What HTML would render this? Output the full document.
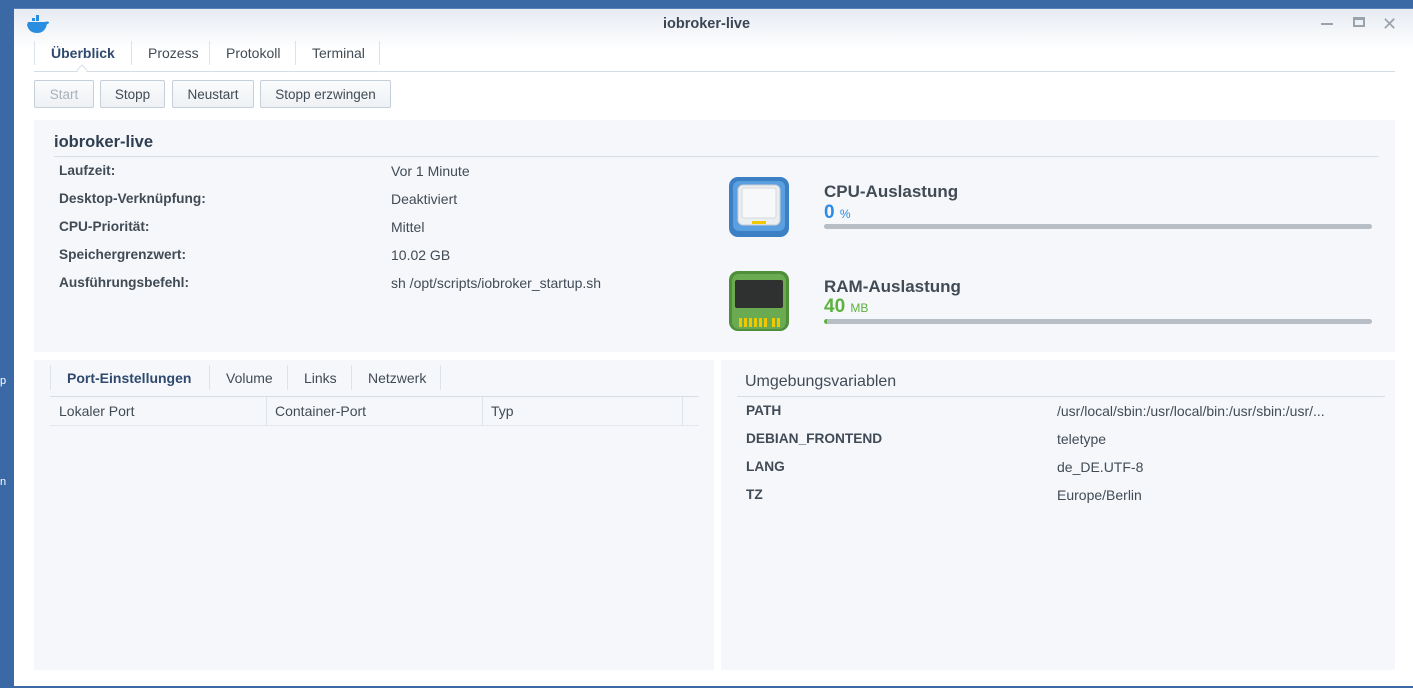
<!DOCTYPE html>
<html><head><meta charset="utf-8"><style>
*{margin:0;padding:0;box-sizing:border-box}
body{width:1413px;height:688px;overflow:hidden;background:#3b69a6;font-family:"Liberation Sans",sans-serif;font-size:13px;color:#414b55;position:relative}
.a{position:absolute}
#win{left:14px;top:8px;width:1399px;height:678px;background:#fff;border-top:1px solid #5a82b8}
#tb{left:0;top:0;width:100%;height:40px;background:linear-gradient(#e6ebf2,#fff)}
.tab{position:absolute;top:45px;font-size:14px;color:#414b55}
.sep{position:absolute;width:1px;background:#dde3ea}
.btn{position:absolute;top:80px;height:28px;border:1px solid #c5cfd9;border-radius:2px;background:linear-gradient(#fafbfc,#eef1f5);font-size:13.5px;text-align:center;line-height:28px;color:#414b55}
.panel{position:absolute;background:#f5f7fb}
.lbl{position:absolute;font-weight:bold;font-size:13.7px;color:#414b55}
.val{position:absolute;font-size:14px;color:#414b55}
.bar{position:absolute;height:5px;border-radius:3px;background:#b7bec6}
</style></head><body>
<div class="a" id="win">
<div class="a" id="tb"></div>
</div>
<svg class="a" style="left:26px;top:15px" width="24" height="20" viewBox="0 0 24 20"><path d="M1 10 Q3 18 11 18 Q19 18 21 9 Q23 9 23 7 Q21 6 19 7 L2 7 Z" fill="#2a8ee0"/><rect x="6" y="3" width="3" height="3" fill="#2a8ee0"/><rect x="10" y="3" width="3" height="3" fill="#2a8ee0"/><rect x="10" y="0" width="3" height="3" fill="#2a8ee0"/></svg>
<div class="a" style="left:0;width:1413px;top:16px;text-align:center;font-weight:bold;font-size:14.5px;color:#3a4654">iobroker-live</div>
<div class="a" style="left:1321px;top:23px;width:12px;height:2px;background:#9aa3ad"></div>
<div class="a" style="left:1353px;top:17px;width:12px;height:10px;border:2px solid #9aa3ad;border-top-width:3px"></div>
<div class="a" style="left:1382px;top:14px;font-size:18px;color:#9aa3ad">✕</div>
<div class="sep" style="left:34px;top:41px;height:24px"></div>
<div class="tab" style="left:51px;font-weight:bold;color:#2f4a6e">Überblick</div>
<div class="sep" style="left:131px;top:41px;height:24px"></div>
<div class="tab" style="left:148px">Prozess</div>
<div class="sep" style="left:209px;top:41px;height:24px"></div>
<div class="tab" style="left:226px">Protokoll</div>
<div class="sep" style="left:295px;top:41px;height:24px"></div>
<div class="tab" style="left:312px">Terminal</div>
<div class="sep" style="left:379px;top:41px;height:24px"></div>
<div class="a" style="left:34px;top:71px;width:1361px;height:1px;background:#d6dde5"></div>
<div class="a" style="left:78px;top:66px;width:8px;height:8px;background:#fff;border-left:1px solid #d6dde5;border-top:1px solid #d6dde5;transform:rotate(45deg)"></div>
<div class="btn" style="left:34px;width:60px;color:#a8b1bb">Start</div>
<div class="btn" style="left:100px;width:65px">Stopp</div>
<div class="btn" style="left:172px;width:82px">Neustart</div>
<div class="btn" style="left:260px;width:131px">Stopp erzwingen</div>
<div class="panel" style="left:34px;top:120px;width:1361px;height:232px"></div>
<div class="a" style="left:54px;top:133px;font-size:16.5px;font-weight:bold;color:#2f3e50">iobroker-live</div>
<div class="a" style="left:54px;top:156px;width:1325px;height:1px;background:#d6dde5"></div>
<div class="lbl" style="left:59px;top:163px">Laufzeit:</div><div class="val" style="left:391px;top:163px">Vor 1 Minute</div>
<div class="lbl" style="left:59px;top:191px">Desktop-Verknüpfung:</div><div class="val" style="left:391px;top:191px">Deaktiviert</div>
<div class="lbl" style="left:59px;top:219px">CPU-Priorität:</div><div class="val" style="left:391px;top:219px">Mittel</div>
<div class="lbl" style="left:59px;top:247px">Speichergrenzwert:</div><div class="val" style="left:391px;top:247px">10.02 GB</div>
<div class="lbl" style="left:59px;top:275px">Ausführungsbefehl:</div><div class="val" style="left:391px;top:275px">sh /opt/scripts/iobroker_startup.sh</div>
<svg class="a" style="left:728px;top:176px" width="62" height="62"><rect x="1" y="1" width="60" height="60" rx="9" fill="#3b7fc4"/><rect x="5" y="5" width="52" height="50" rx="6" fill="#5aa0e0"/><rect x="10" y="9" width="42" height="40" rx="5" fill="#eceff2" stroke="#c9ced4"/><rect x="14" y="12" width="34" height="30" rx="2" fill="#f7f8fa" stroke="#d4d8dd"/><rect x="24" y="45" width="14" height="3" fill="#f0c800"/></svg>
<div class="a" style="left:824px;top:182px;font-size:17px;font-weight:bold;color:#414b55">CPU-Auslastung</div>
<div class="a" style="left:824px;top:202px;font-size:19px;font-weight:bold;color:#2b8be6">0 <span style="font-size:12px;font-weight:normal">%</span></div>
<div class="bar" style="left:824px;top:224px;width:548px"></div>
<svg class="a" style="left:728px;top:270px" width="62" height="62"><rect x="1" y="1" width="60" height="60" rx="9" fill="#4f8f3a"/><rect x="4" y="4" width="54" height="55" rx="7" fill="#6aaa50"/><rect x="7" y="10" width="48" height="28" rx="2" fill="#2e312f"/><g fill="#f0c800"><rect x="11" y="48" width="3" height="9"/><rect x="16" y="48" width="3" height="9"/><rect x="21" y="48" width="3" height="9"/><rect x="26" y="48" width="3" height="9"/><rect x="31" y="48" width="3" height="9"/><rect x="36" y="48" width="3" height="9"/><rect x="44" y="48" width="3" height="9"/><rect x="49" y="48" width="3" height="9"/></g></svg>
<div class="a" style="left:824px;top:277px;font-size:17px;font-weight:bold;color:#414b55">RAM-Auslastung</div>
<div class="a" style="left:824px;top:296px;font-size:19px;font-weight:bold;color:#5cb23f">40 <span style="font-size:12px;font-weight:normal">MB</span></div>
<div class="bar" style="left:824px;top:319px;width:548px;border-left:3px solid #5cb23f"></div>
<div class="panel" style="left:34px;top:360px;width:680px;height:310px"></div>
<div class="sep" style="left:50px;top:365px;height:25px"></div>
<div class="tab" style="left:67px;top:370px;font-weight:bold;color:#2f4a6e">Port-Einstellungen</div>
<div class="sep" style="left:209px;top:365px;height:25px"></div>
<div class="tab" style="left:226px;top:370px">Volume</div>
<div class="sep" style="left:287px;top:365px;height:25px"></div>
<div class="tab" style="left:304px;top:370px">Links</div>
<div class="sep" style="left:351px;top:365px;height:25px"></div>
<div class="tab" style="left:368px;top:370px">Netzwerk</div>
<div class="sep" style="left:440px;top:365px;height:25px"></div>
<div class="a" style="left:50px;top:396px;width:649px;height:1px;background:#d6dde5"></div>
<div class="a" style="left:50px;top:425px;width:649px;height:1px;background:#e3e8ee"></div>
<div class="sep" style="left:266px;top:397px;height:28px"></div>
<div class="sep" style="left:482px;top:397px;height:28px"></div>
<div class="sep" style="left:682px;top:397px;height:28px"></div>
<div class="val" style="left:59px;top:403px">Lokaler Port</div>
<div class="val" style="left:275px;top:403px">Container-Port</div>
<div class="val" style="left:491px;top:403px">Typ</div>
<div class="panel" style="left:721px;top:360px;width:674px;height:310px"></div>
<div class="a" style="left:745px;top:373px;font-size:16px;color:#414b55">Umgebungsvariablen</div>
<div class="a" style="left:737px;top:396px;width:648px;height:1px;background:#d6dde5"></div>
<div class="lbl" style="left:746px;top:403px">PATH</div><div class="val" style="left:1057px;top:403px">/usr/local/sbin:/usr/local/bin:/usr/sbin:/usr/...</div>
<div class="lbl" style="left:746px;top:431px">DEBIAN_FRONTEND</div><div class="val" style="left:1057px;top:431px">teletype</div>
<div class="lbl" style="left:746px;top:459px">LANG</div><div class="val" style="left:1057px;top:459px">de_DE.UTF-8</div>
<div class="lbl" style="left:746px;top:487px">TZ</div><div class="val" style="left:1057px;top:487px">Europe/Berlin</div>
<div class="a" style="left:0;top:375px;font-size:11px;color:#fff">p</div>
<div class="a" style="left:0;top:476px;font-size:11px;color:#fff">n</div>
</body></html>
